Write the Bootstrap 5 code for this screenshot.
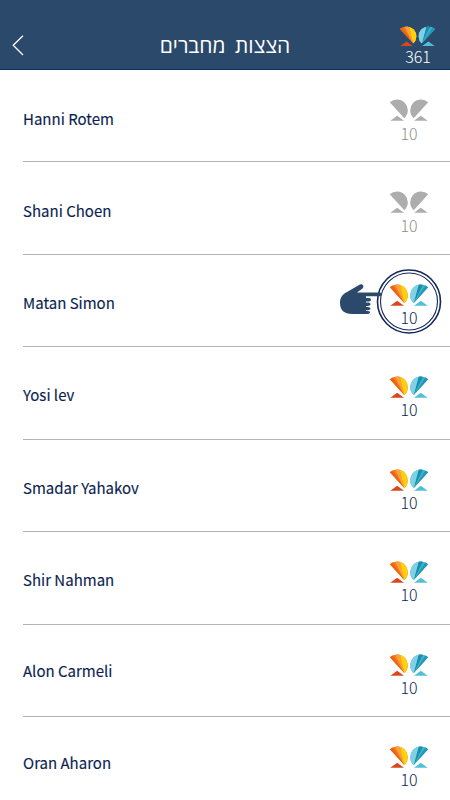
<!DOCTYPE html>
<html lang="en">
<head>
<meta charset="utf-8">
<meta name="viewport" content="width=device-width, initial-scale=1">
<title>Friends</title>
<link href="https://cdn.jsdelivr.net/npm/bootstrap@5.3.0/dist/css/bootstrap.min.css" rel="stylesheet">
<style>
body{font-family:"Noto Sans CJK JP","Noto Sans CJK SC",sans-serif;color:#0c1f52;height:800px;overflow:hidden;background:#fff}
.topbar{height:70px;background:#2b4a6b;border-bottom:1px solid #0b2f5e;padding:0 14px 0 12px}
.topbar h1{font-family:"Open Sans","Noto Sans",sans-serif;font-size:21px;font-weight:400;line-height:30px;margin-top:29.5px;word-spacing:4px}
.back{margin-top:35px;width:38px}
.score{width:40px;font-weight:300;font-size:16px;line-height:16px;text-align:center}
.topbar .score{margin-top:25.5px;width:36px}
.topbar .score span{margin-top:2.5px}
.friend{height:92.5px;margin-left:23px;padding-right:21px;border-bottom:1px solid #b3b3bb}
.friend:first-child{height:92px}
.name{font-size:15px;font-weight:400;line-height:24px;margin-top:36.4px;-webkit-text-stroke:.15px #0c1f52}
.rise-0{margin-top:37px}
.rise-1{margin-top:35.5px}
.rise-2{margin-top:34px}
.friend .score{margin-top:29px}
.score svg{display:block;width:42px;height:22.4px;margin-left:-.6px}
.score span{display:block;margin-top:2.9px}
.score.muted-score span{margin-top:3.8px}
.topbar .score svg{width:39px;height:20.6px;margin-left:-2.2px;margin-bottom:-.6px}
.muted-score{color:#8f8f8f}
.ring{left:376px;top:268px}
.hand{left:339px;top:283px}
</style>
<script src="https://cdn.jsdelivr.net/npm/bootstrap@5.3.0/dist/js/bootstrap.bundle.min.js"></script>
</head>
<body class="position-relative">
<svg width="0" height="0" class="position-absolute">
<defs>
<clipPath id="wing"><path d="M1.7 3.2A10.58 10.58 0 0 1 16 18.8Z"/></clipPath>
</defs>
<symbol id="fly" viewBox="0 0 41.2 22">
<g clip-path="url(#wing)">
<path fill="#f47a1c" d="M0 0H20V20H0Z"/>
<path fill="#ec6212" d="M16 18.8L0 1.3V0H3.6Z"/>
<path fill="#f9a23c" d="M16 18.8L6.6 0H11.5Z"/>
<path fill="#ffd10a" d="M16 18.8L11.5 0H20V18.8Z"/>
</g>
<path fill="#d8481c" d="M2.2 21.4L9 16.5L15.7 21.4Z"/>
<g transform="translate(41.2 0) scale(-1 1)">
<g clip-path="url(#wing)">
<path fill="#43b1cc" d="M0 0H20V20H0Z"/>
<path fill="#2398b6" d="M16 18.8L0 1.3V0H3.6Z"/>
<path fill="#1690b0" d="M16 18.8L6.6 0H11Z"/>
<path fill="#82d1e3" d="M16 18.8L11 0H20V18.8Z"/>
</g>
<path fill="#52bfd9" d="M2.2 21.4L9 16.5L15.7 21.4Z"/>
</g>
</symbol>
<symbol id="fly-off" viewBox="0 0 41.2 22">
<path fill="#adadad" d="M1.7 3.2A10.58 10.58 0 0 1 16 18.8ZM2.2 21.4L9 16.5L15.7 21.4ZM39.5 3.2A10.58 10.58 0 0 0 25.2 18.8ZM39 21.4L32.2 16.5L25.5 21.4Z"/>
</symbol>
</svg>
<header class="topbar d-flex justify-content-between align-items-start text-white">
<svg class="back" height="21" viewBox="0 0 38 21" fill="none" stroke="#fff" stroke-width="1.3"><path d="M11 .8L1.2 10.3L11 20"/></svg>
<h1 class="mb-0" dir="rtl" lang="he">הצצות מחברים</h1>
<div class="score"><svg><use href="#fly"/></svg><span>361</span></div>
</header>
<main>
<div class="friend d-flex justify-content-between align-items-start"><div class="name rise-0">Hanni Rotem</div><div class="score muted-score"><svg><use href="#fly-off"/></svg><span>10</span></div></div>
<div class="friend d-flex justify-content-between align-items-start"><div class="name rise-0">Shani Choen</div><div class="score muted-score"><svg><use href="#fly-off"/></svg><span>10</span></div></div>
<div class="friend d-flex justify-content-between align-items-start"><div class="name">Matan Simon</div><div class="score"><svg><use href="#fly"/></svg><span>10</span></div></div>
<div class="friend d-flex justify-content-between align-items-start"><div class="name rise-1">Yosi lev</div><div class="score"><svg><use href="#fly"/></svg><span>10</span></div></div>
<div class="friend d-flex justify-content-between align-items-start"><div class="name">Smadar Yahakov</div><div class="score"><svg><use href="#fly"/></svg><span>10</span></div></div>
<div class="friend d-flex justify-content-between align-items-start"><div class="name rise-1">Shir Nahman</div><div class="score"><svg><use href="#fly"/></svg><span>10</span></div></div>
<div class="friend d-flex justify-content-between align-items-start"><div class="name rise-2">Alon Carmeli</div><div class="score"><svg><use href="#fly"/></svg><span>10</span></div></div>
<div class="friend d-flex justify-content-between align-items-start"><div class="name rise-2">Oran Aharon</div><div class="score"><svg><use href="#fly"/></svg><span>10</span></div></div>
</main>
<svg class="ring position-absolute" width="66" height="66" viewBox="0 0 66 66" fill="none" stroke="#14285a"><circle cx="33" cy="33.5" r="31.5" stroke-width="1.6"/><circle cx="33" cy="33.5" r="28.5" stroke-width="1.1"/></svg>
<svg class="hand position-absolute" width="44" height="32" viewBox="0 0 44 32"><path fill="#2b4a6b" d="M1 20C1 14 4 11 8 9L20 2C23 0 26 3 23.5 5.5L18 9.5H41Q43 9.5 43 11.2T41 13.2H27V15H30Q32 15 32 16.8T30 18.6H27V19.6H29.5Q31.5 19.6 31.5 21.3T29 23H27V24H29Q31.5 24 31.5 25.6T28.5 27.3H27V28H29Q31.5 28 31 29.5T28 31H13C5 31 1 27 1 20Z"/></svg>
</body>
</html>
